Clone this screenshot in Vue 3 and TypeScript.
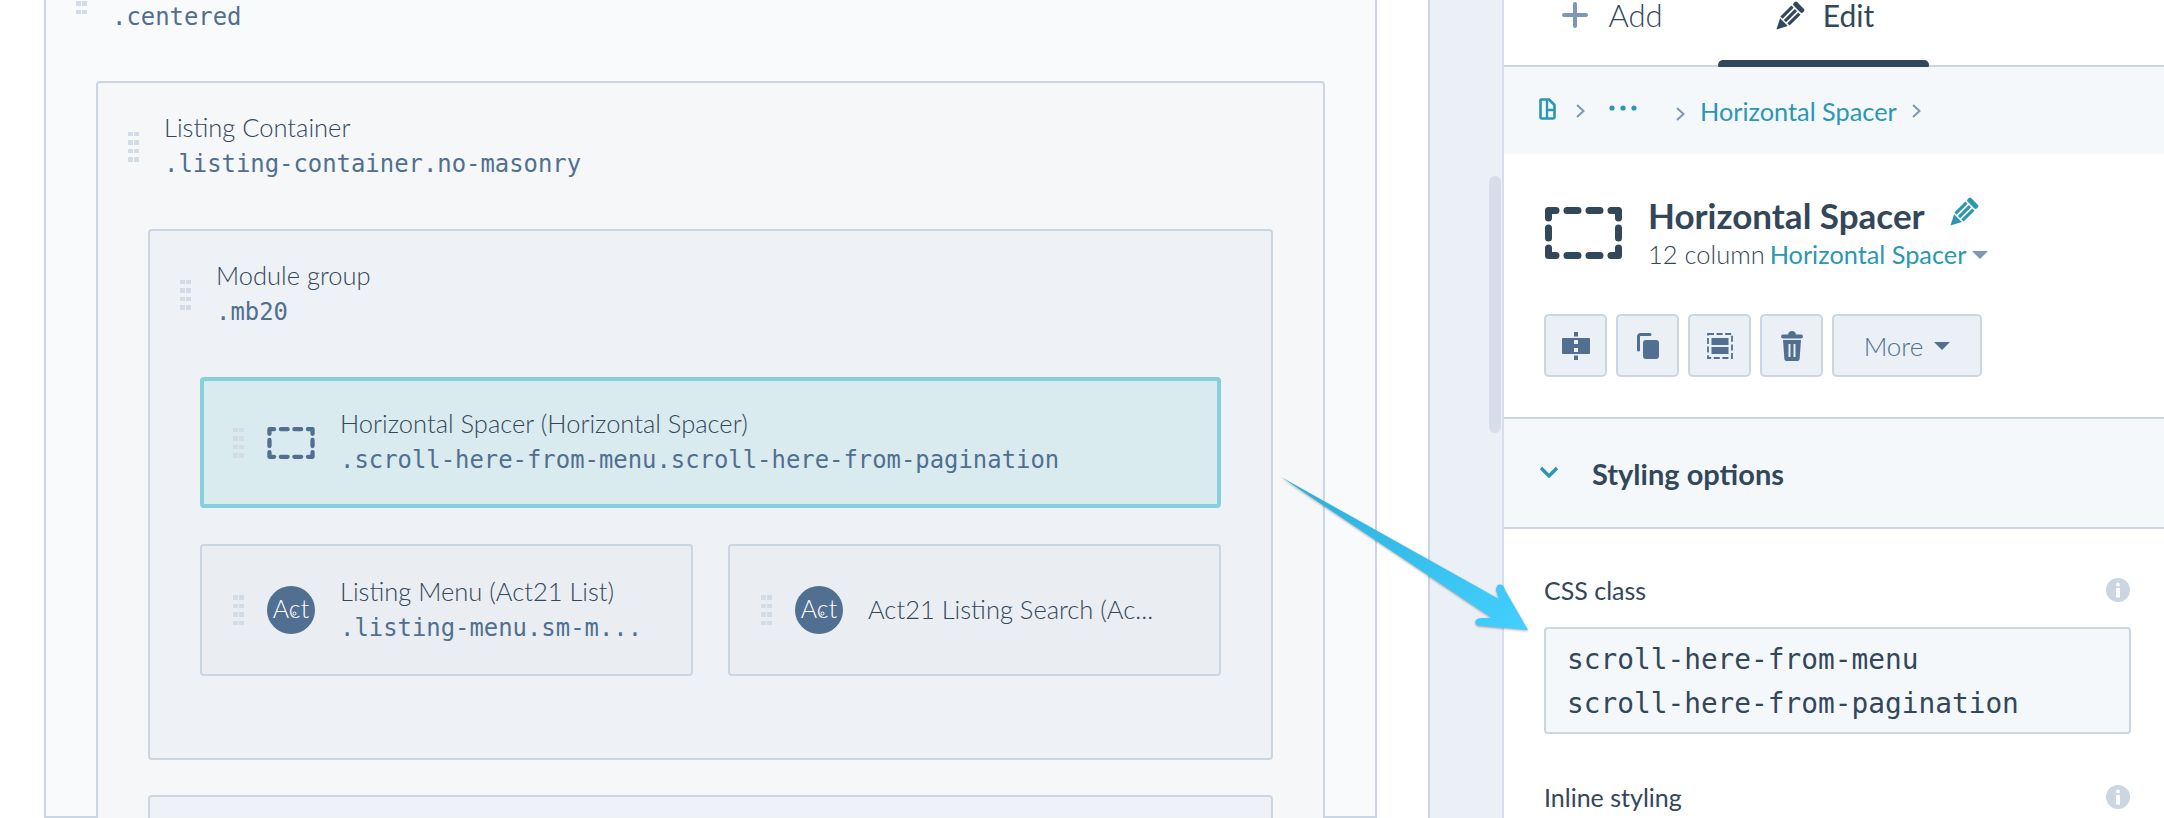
<template>
  <div class="page">
    <div class="canvas">
      <div class="box outer">
        <div class="head">
          <div class="grip"><i v-for="n in 8" :key="n"></i></div>
          <div class="labels">
            <div class="code">.centered</div>
          </div>
        </div>
        <div class="box listing">
          <div class="head">
            <div class="grip"><i v-for="n in 8" :key="n"></i></div>
            <div class="labels">
              <div class="name">Listing Container</div>
              <div class="code">.listing-container.no-masonry</div>
            </div>
          </div>
          <div class="box group">
            <div class="head">
              <div class="grip"><i v-for="n in 8" :key="n"></i></div>
              <div class="labels">
                <div class="name">Module group</div>
                <div class="code">.mb20</div>
              </div>
            </div>
            <div class="item selected">
              <div class="grip"><i v-for="n in 8" :key="n"></i></div>
              <svg class="item-icon spacer-small" viewBox="0 0 77 52">
                <path d="M3.5 11V3.5H11M22 3.5H33M44 3.5H55M66 3.5H73.5V11M3.5 21V31M73.5 21V31M3.5 41V48.5H11M22 48.5H33M44 48.5H55M66 48.5H73.5V41" fill="none" stroke="#516f90" stroke-width="7" stroke-linecap="round" stroke-linejoin="round" />
              </svg>
              <div class="labels">
                <div class="name">Horizontal Spacer (Horizontal Spacer)</div>
                <div class="code">.scroll-here-from-menu.scroll-here-from-pagination</div>
              </div>
            </div>
            <div class="item-row">
              <div v-for="mod in modules" :key="mod.name" class="item">
                <div class="grip"><i v-for="n in 8" :key="n"></i></div>
                <svg class="item-icon" viewBox="0 0 48 48">
                  <circle cx="24" cy="24" r="24" fill="#516f90" />
                  <text x="24" y="32" text-anchor="middle" class="act">Act</text>
                  <circle cx="27.5" cy="27.5" r="1.5" fill="none" stroke="#fff" stroke-width="1" />
                </svg>
                <div class="labels">
                  <div class="name">{{ mod.name }}</div>
                  <div v-if="mod.code" class="code">{{ mod.code }}</div>
                </div>
              </div>
            </div>
          </div>
          <div class="box group next"></div>
        </div>
      </div>
    </div>

    <div class="strip"><div class="thumb"></div></div>

    <div class="panel">
      <div class="tabs">
        <div class="tab">
          <svg class="plus" viewBox="0 0 26 26">
            <path d="M13 2V24M2 13H24" stroke="#7c98b6" stroke-width="4" stroke-linecap="round" fill="none" />
          </svg>
          <span>Add</span>
        </div>
        <div class="tab active">
          <svg class="pen" viewBox="0 0 29 29">
            <g transform="translate(0.5 28.5) rotate(45)" fill="#33475b">
              <path d="M0 0L-5.5 -10.5H5.5Z" />
              <rect x="-6.5" y="-27.5" width="3.2" height="15.5" />
              <rect x="-1.6" y="-27.5" width="3.2" height="15.5" />
              <rect x="3.3" y="-27.5" width="3.2" height="15.5" />
              <rect x="-6.5" y="-34" width="13" height="5" rx="2" />
            </g>
          </svg>
          <span>Edit</span>
        </div>
      </div>

      <div class="crumbs">
        <svg class="crumb-page" viewBox="0 0 17 22">
          <path d="M2 1.5H10L15.5 7V19A1.5 1.5 0 0 1 14 20.5H3A1.5 1.5 0 0 1 1.5 19V2Z" fill="none" stroke="#2b97b1" stroke-width="2.6" stroke-linejoin="round" />
          <path d="M8 2V12H15M8 12V20" fill="none" stroke="#2b97b1" stroke-width="2.4" />
        </svg>
        <svg class="chev c1" viewBox="0 0 9 14"><path d="M1 1L7.5 7L1 13" fill="none" stroke="#7c98b6" stroke-width="2" /></svg>
        <svg class="dots" viewBox="0 0 28 6">
          <circle cx="3" cy="3" r="2.6" fill="#2b97b1" />
          <circle cx="14" cy="3" r="2.6" fill="#2b97b1" />
          <circle cx="25" cy="3" r="2.6" fill="#2b97b1" />
        </svg>
        <svg class="chev c2" viewBox="0 0 9 14"><path d="M1 1L7.5 7L1 13" fill="none" stroke="#7c98b6" stroke-width="2" /></svg>
        <span class="link">Horizontal Spacer</span>
        <svg class="chev c3" viewBox="0 0 9 14"><path d="M1 1L7.5 7L1 13" fill="none" stroke="#7c98b6" stroke-width="2" /></svg>
      </div>

      <div class="title-block">
        <svg class="spacer-big" viewBox="0 0 77 52">
          <path d="M3.5 11V3.5H11M22 3.5H33M44 3.5H55M66 3.5H73.5V11M3.5 21V31M73.5 21V31M3.5 41V48.5H11M22 48.5H33M44 48.5H55M66 48.5H73.5V41" fill="none" stroke="#33475b" stroke-width="7" stroke-linecap="round" stroke-linejoin="round" />
        </svg>
        <div>
          <div class="title">
            Horizontal Spacer
            <svg class="title-pen" viewBox="0 0 29 29">
              <g transform="translate(0.5 28.5) rotate(45)" fill="#2b97b1">
                <path d="M0 0L-5.5 -10.5H5.5Z" />
                <rect x="-6.5" y="-27.5" width="3.2" height="15.5" />
                <rect x="-1.6" y="-27.5" width="3.2" height="15.5" />
                <rect x="3.3" y="-27.5" width="3.2" height="15.5" />
                <rect x="-6.5" y="-34" width="13" height="5" rx="2" />
              </g>
            </svg>
          </div>
          <div class="sub">
            12 column <span class="link">Horizontal Spacer</span>
            <span class="caret small"></span>
          </div>
        </div>
      </div>

      <div class="actions">
        <button class="btn">
          <svg viewBox="0 0 28 28" width="28" height="28">
            <rect x="0" y="6" width="28" height="16" rx="1" fill="#516f90" />
            <rect x="12" y="0" width="4" height="4.5" fill="#516f90" />
            <rect x="12" y="23.5" width="4" height="4.5" fill="#516f90" />
            <rect x="12" y="8" width="4" height="4" fill="#eaf0f6" />
            <rect x="12" y="16" width="4" height="4" fill="#eaf0f6" />
          </svg>
        </button>
        <button class="btn">
          <svg viewBox="0 0 22 26" width="22" height="26">
            <path d="M1.5 17V3.5A2 2 0 0 1 3.5 1.5H13" fill="none" stroke="#516f90" stroke-width="3" stroke-linecap="round" />
            <rect x="6" y="7" width="16" height="19" rx="3" fill="#516f90" />
          </svg>
        </button>
        <button class="btn">
          <svg viewBox="0 0 26 26" width="26" height="26">
            <rect x="1" y="1" width="24" height="24" fill="none" stroke="#516f90" stroke-width="1.8" stroke-dasharray="6 2.6" />
            <rect x="4.5" y="5" width="17" height="7" fill="#516f90" />
            <rect x="4.5" y="14" width="17" height="7" fill="#516f90" />
          </svg>
        </button>
        <button class="btn">
          <svg viewBox="0 0 22 30" width="22" height="30">
            <path d="M7 4.5Q7 0 11 0Q15 0 15 4.5Z" fill="#516f90" />
            <rect x="0" y="3.5" width="22" height="4" rx="2" fill="#516f90" />
            <path d="M2 9H20L18.6 28A2 2 0 0 1 16.6 30H5.4A2 2 0 0 1 3.4 28Z" fill="#516f90" />
            <rect x="7.5" y="13" width="2" height="13" fill="#eaf0f6" />
            <rect x="12.5" y="13" width="2" height="13" fill="#eaf0f6" />
          </svg>
        </button>
        <button class="btn more">More <span class="caret"></span></button>
      </div>

      <div class="section">
        <svg class="section-chev" viewBox="0 0 20 12"><path d="M2 2L10 10L18 2" fill="none" stroke="#2b97b1" stroke-width="3.4" /></svg>
        <span>Styling options</span>
      </div>

      <div class="field">
        <div class="field-label">
          <span>CSS class</span>
          <svg class="info" viewBox="0 0 24 24">
            <circle cx="12" cy="12" r="12" fill="#cbd6e2" />
            <circle cx="12" cy="6.5" r="2" fill="#fff" />
            <rect x="10" y="10" width="4" height="9.5" fill="#fff" />
          </svg>
        </div>
        <div class="class-input">
          <div>scroll-here-from-menu</div>
          <div>scroll-here-from-pagination</div>
        </div>
      </div>
      <div class="field second">
        <div class="field-label">
          <span>Inline styling</span>
          <svg class="info" viewBox="0 0 24 24">
            <circle cx="12" cy="12" r="12" fill="#cbd6e2" />
            <circle cx="12" cy="6.5" r="2" fill="#fff" />
            <rect x="10" y="10" width="4" height="9.5" fill="#fff" />
          </svg>
        </div>
      </div>
    </div>

    <svg class="arrow" viewBox="1270 470 270 170" width="270" height="170">
      <defs>
        <linearGradient id="arrowFill" x1="0" y1="0" x2="1" y2="1">
          <stop offset="0" stop-color="#2aaed9" />
          <stop offset="1" stop-color="#43d0ff" />
        </linearGradient>
      </defs>
      <path d="M1281 477L1499 599L1496 590Q1497 583 1502 585Q1504 586 1505 590L1528 630L1478 625.5Q1474 624 1476 620Q1478 618 1482 618L1492 618Z" fill="url(#arrowFill)" />
    </svg>
  </div>
</template>

<script setup lang="ts">
interface IModule {
  name: string;
  code?: string;
}

const modules: IModule[] = [
  { name: "Listing Menu (Act21 List)", code: ".listing-menu.sm-m..." },
  { name: "Act21 Listing Search (Ac..." },
];
</script>

<style>
html,
body {
  margin: 0;
  background: #fff;
}
</style>

<style scoped>
.page {
  position: relative;
  display: flex;
  width: 2164px;
  height: 818px;
  overflow: hidden;
  font-family: Lato, "Noto Sans", sans-serif;
  font-weight: 300;
  color: #33475b;
}
.canvas {
  width: 1428px;
  flex: none;
  padding-left: 44px;
  box-sizing: border-box;
}

.box {
  border: 2px solid #cbd6e2;
  border-radius: 4px;
  padding: 27px 50px 0;
  box-sizing: border-box;
}
.outer {
  width: 1333px;
  height: 818px;
  padding-top: 0;
  border-top: 0;
  border-radius: 0;
  background: #f9fafc;
}
.listing {
  background: #f5f7f9;
  height: 900px;
}
.group {
  background: #eef2f6;
  height: 531px;
}
.next {
  height: 200px;
  margin-top: 35px;
}

.head {
  display: flex;
  align-items: center;
  margin-bottom: 46px;
  margin-left: -20px;
}
.head .grip {
  margin-right: 25px;
}
.outer > .head {
  height: 36px;
  margin-bottom: 45px;
}
.outer > .head .grip {
  margin-top: -38px;
}
.outer > .head .labels {
  margin-top: -2px;
}
.name {
  font-size: 25.5px;
  line-height: 35px;
  margin-bottom: 1px;
  white-space: nowrap;
}
.code {
  font-family: "DejaVu Sans Mono", monospace;
  font-size: 23.9px;
  line-height: 37px;
  color: #516f90;
  white-space: nowrap;
}

.grip {
  display: grid;
  grid-template-columns: 5px 5px;
  grid-auto-rows: 4.5px;
  column-gap: 1px;
  row-gap: 4px;
  flex: none;
}
.grip i {
  background: #d3dbe7;
}

.item {
  display: flex;
  align-items: center;
  height: 132px;
  border: 2px solid #cbd6e2;
  border-radius: 4px;
  padding-left: 31px;
  background: #eaeef2;
  box-sizing: border-box;
}
.item.selected {
  height: 131px;
  border: 4px solid #86d0db;
  padding-left: 29px;
  background: #d9ebef;
}
.item-row {
  display: grid;
  grid-template-columns: 1fr 1fr;
  gap: 35px;
  margin-top: 36px;
}
.item-icon {
  width: 48px;
  height: 48px;
  margin: 0 25px 0 23px;
  flex: none;
}
.spacer-small {
  height: 32px;
}
.act {
  font-family: Lato, sans-serif;
  font-size: 25px;
  font-weight: 300;
  fill: #fff;
}

.strip {
  position: relative;
  width: 76px;
  flex: none;
  background: #eaf0f6;
  border-left: 2px solid #cbd6e2;
  border-right: 2px solid #d6deeb;
  box-sizing: border-box;
}
.thumb {
  position: absolute;
  top: 176px;
  right: 1px;
  width: 12px;
  height: 257px;
  border-radius: 6px;
  background: #d6deeb;
}

.panel {
  flex: 1;
  min-width: 0;
  background: #fff;
}
.tabs {
  display: flex;
  height: 67px;
  padding-left: 3px;
  border-bottom: 2px solid #cbd6e2;
  box-sizing: border-box;
}
.tab {
  position: relative;
  display: flex;
  justify-content: center;
  gap: 20px;
  width: 211px;
  height: 65px;
  font-size: 31px;
  line-height: 30px;
}
.tab.active {
  gap: 18px;
  padding-left: 3px;
  box-sizing: border-box;
  font-size: 30px;
  font-weight: 400;
}
.tab.active::after {
  content: "";
  position: absolute;
  left: 0;
  right: 0;
  bottom: -5px;
  height: 10px;
  border-radius: 5px;
  background: #33475b;
}
.plus {
  width: 26px;
  height: 26px;
  margin-top: 2px;
}
.pen {
  width: 29px;
  height: 29px;
  margin-top: 1px;
}

.crumbs {
  position: relative;
  display: flex;
  align-items: center;
  height: 87px;
  padding-left: 35px;
  background: #f5f8fb;
  box-sizing: border-box;
}
.crumb-page {
  width: 17px;
  height: 22px;
  margin-top: -3px;
}
.chev {
  width: 9px;
  height: 14px;
  flex: none;
}
.c1 {
  margin-left: 20px;
}
.dots {
  width: 28px;
  height: 6px;
  margin: -5px 0 0 24px;
}
.c2 {
  margin: 6px 15px 0 39px;
}
.c3 {
  margin: 0 0 0 15px;
}
.crumbs .link {
  font-size: 25.3px;
}
.link {
  color: #2b97b1;
  font-weight: 400;
}

.title-block {
  display: flex;
  align-items: flex-start;
  gap: 26px;
  padding: 41px 0 0 41px;
}
.spacer-big {
  width: 77px;
  height: 52px;
  margin-top: 12px;
  flex: none;
}
.title {
  display: flex;
  align-items: center;
  gap: 25px;
  height: 39px;
  font-size: 35px;
  font-weight: 700;
}
.title-pen {
  width: 29px;
  height: 29px;
  margin-top: -6px;
}
.sub {
  margin-top: 1px;
  font-size: 25.5px;
  line-height: 39px;
}
.sub .link {
  margin-left: -2px;
  font-size: 25.3px;
}
.caret {
  display: inline-block;
  width: 0;
  height: 0;
  margin-left: 6px;
  vertical-align: middle;
  border-left: 8px solid transparent;
  border-right: 8px solid transparent;
  border-top: 8px solid #516f90;
}
.caret.small {
  border-top-color: #7c98b6;
  margin-left: 6px;
  margin-top: -6px;
}

.actions {
  display: flex;
  gap: 9px;
  padding: 40px 0 0 40px;
}
.btn {
  display: flex;
  align-items: center;
  justify-content: center;
  width: 63px;
  height: 63px;
  padding: 0;
  border: 2px solid #cbd6e2;
  border-radius: 5px;
  background: #eaf0f6;
  box-sizing: border-box;
  font-family: inherit;
  font-weight: 300;
  font-size: 26px;
  color: #516f90;
}
.btn.more {
  width: 150px;
  gap: 5px;
}

.section {
  display: flex;
  align-items: center;
  height: 112px;
  margin-top: 40px;
  padding-left: 35px;
  background: #f5f8fb;
  border-top: 2px solid #cbd6e2;
  border-bottom: 2px solid #cbd6e2;
  box-sizing: border-box;
  font-size: 29px;
  font-weight: 700;
}
.section-chev {
  width: 20px;
  height: 12px;
  margin-right: 33px;
  margin-top: -3px;
}

.field {
  padding: 46px 33px 0 40px;
}
.field.second {
  padding-top: 48px;
}
.field-label {
  display: flex;
  align-items: center;
  justify-content: space-between;
  height: 30px;
  font-size: 25px;
  font-weight: 400;
}
.info {
  width: 24px;
  height: 24px;
  margin-right: 1px;
}
.class-input {
  height: 107px;
  margin-top: 22px;
  padding: 9px 21px 0;
  border: 2px solid #cbd6e2;
  border-radius: 4px;
  background: #f5f8fb;
  box-sizing: border-box;
  font-family: "DejaVu Sans Mono", monospace;
  font-size: 27.8px;
  line-height: 44px;
}

.arrow {
  position: absolute;
  left: 1270px;
  top: 470px;
  filter: drop-shadow(0 1px 1px rgba(0, 0, 0, 0.35));
}
</style>
